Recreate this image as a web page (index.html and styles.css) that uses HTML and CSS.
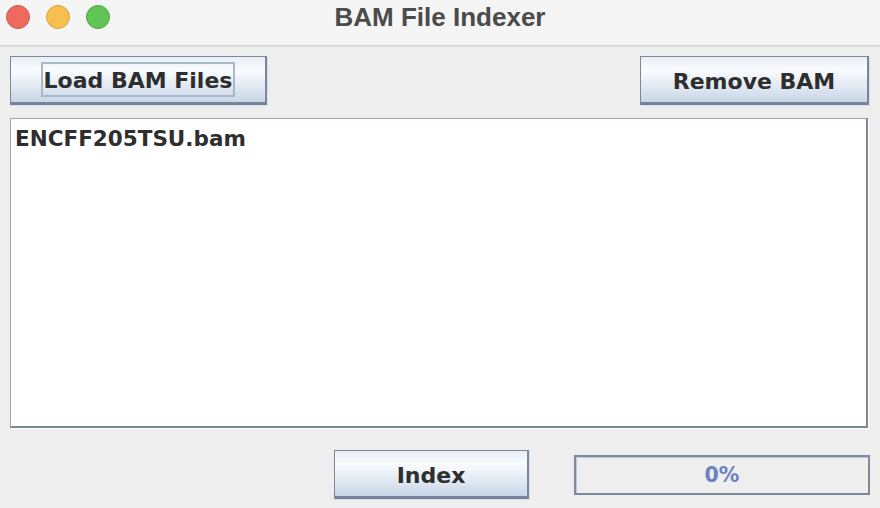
FILE: index.html
```html
<!DOCTYPE html>
<html>
<head>
<meta charset="utf-8">
<title>BAM File Indexer</title>
<link rel="stylesheet" href="styles.css">
</head>
<body>
<div class="window">
  <div class="titlebar">
    <div class="lights">
      <span class="light red"></span>
      <span class="light yellow"></span>
      <span class="light green"></span>
    </div>
    <div class="title">BAM File Indexer</div>
  </div>
  <div class="content">
    <div class="toprow">
      <button class="btn btn-load"><span class="focus">Load BAM Files</span></button>
      <button class="btn btn-remove">Remove BAM</button>
    </div>
    <div class="list">
      <div class="item">ENCFF205TSU.bam</div>
    </div>
    <div class="bottomrow">
      <button class="btn btn-index">Index</button>
      <div class="progress">0%</div>
    </div>
  </div>
</div>
</body>
</html>
```
FILE: styles.css
```css
html, body {
  margin: 0;
  padding: 0;
}
body {
  width: 880px;
  height: 508px;
  overflow: hidden;
  background: #eeeeee;
  font-family: "DejaVu Sans", "Liberation Sans", sans-serif;
}
.window {
  width: 880px;
  height: 508px;
  display: flex;
  flex-direction: column;
  background: #eeeeee;
}
.titlebar {
  position: relative;
  height: 45px;
  flex: none;
  background: #f4f5f4;
  border-bottom: 1px solid #d3d3d3;
  box-shadow: 0 1px 0 #e2e2e2;
}
.lights {
  position: absolute;
  left: 6px;
  top: 5px;
  display: flex;
  gap: 16px;
}
.light {
  width: 22px;
  height: 22px;
  border-radius: 50%;
  display: block;
}
.red { background: #ee6a5f; border: 1px solid #d5584d; }
.yellow { background: #f6bf4f; border: 1px solid #dba343; }
.green { background: #61c454; border: 1px solid #50a83f; }
.title {
  text-align: center;
  font-family: "Liberation Sans", Arial, sans-serif;
  font-weight: bold;
  font-size: 26px;
  line-height: 34px;
  color: #4b4b4b;
}
.content {
  flex: 1;
  display: flex;
  flex-direction: column;
}
.toprow {
  display: flex;
  justify-content: space-between;
  padding: 10px 11px 0 10px;
}
.btn {
  box-sizing: border-box;
  height: 49px;
  border: 1px solid #7c889a;
  border-right-width: 2px;
  border-bottom-width: 3px;
  border-bottom-color: #778498;
  background: linear-gradient(#e8eef6 0%, #fafcfe 28%, #e6ecf4 60%, #c7d6e7 100%);
  box-shadow: 1px 1px 0 #d4e0ee;
  font-family: "DejaVu Sans", "Liberation Sans", sans-serif;
  font-weight: bold;
  font-size: 22px;
  color: #2e2e2e;
  padding: 3px 0 0 0;
  display: flex;
  align-items: center;
  justify-content: center;
}
.btn-load { width: 257px; padding-top: 0; }
.btn-remove { width: 229px; }
.btn-index { width: 195px; }
.focus {
  display: block;
  box-sizing: border-box;
  border: 2px solid #a8b8cb;
  padding: 4px 1px 2px 1px;
  line-height: 25px;
}
.list {
  box-sizing: border-box;
  margin: 13px 12px 0 10px;
  height: 310px;
  background: #ffffff;
  border-top: 1px solid #9aa6b6;
  border-left: 1px solid #9aa6b6;
  border-right: 2px solid #7a8797;
  border-bottom: 2px solid #7a8797;
  box-shadow: 1px 1px 0 #ffffff;
  padding: 5px 4px;
}
.item {
  font-weight: bold;
  font-size: 21.5px;
  line-height: 30px;
  color: #2e2e2e;
}
.bottomrow {
  display: flex;
  justify-content: flex-end;
  align-items: center;
  gap: 45px;
  padding: 22px 10px 0 0;
}
.progress {
  box-sizing: border-box;
  width: 296px;
  height: 40px;
  border: 2px solid #7f8a9b;
  box-shadow: inset 1px 1px 0 #b9c9df;
  background: #eeeeee;
  color: #6a82be;
  font-weight: bold;
  font-size: 20.5px;
  display: flex;
  align-items: center;
  justify-content: center;
}
```
